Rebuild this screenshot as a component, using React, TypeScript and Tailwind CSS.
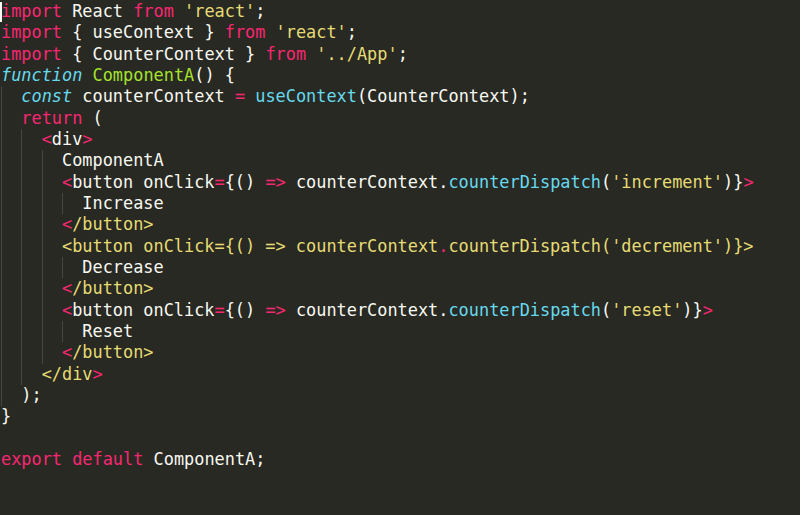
type Tok = [string, string];

const k = "text-[#f92672]";
const s = "text-[#e6db74]";
const f = "text-[#a6e22e]";
const c = "text-[#66d9ef]";
const ci = "text-[#66d9ef] italic";
const w = "text-[#f8f8f2]";

const buttonLine = (arg: string): Tok[] => [
  [k, "<"],
  [w, "button onClick"],
  [k, "="],
  [w, "{() "],
  [k, "=>"],
  [w, " counterContext."],
  [c, "counterDispatch"],
  [w, "("],
  [s, `'${arg}'`],
  [w, ")}"],
  [k, ">"],
];

const lines: [number, Tok[]][] = [
  [0, [[k, "import"], [w, " React "], [k, "from"], [w, " "], [s, "'react'"], [w, ";"]]],
  [0, [[k, "import"], [w, " { useContext } "], [k, "from"], [w, " "], [s, "'react'"], [w, ";"]]],
  [0, [[k, "import"], [w, " { CounterContext } "], [k, "from"], [w, " "], [s, "'../App'"], [w, ";"]]],
  [0, [[ci, "function"], [w, " "], [f, "ComponentA"], [w, "() {"]]],
  [1, [[ci, "const"], [w, " counterContext "], [k, "="], [w, " "], [c, "useContext"], [w, "(CounterContext);"]]],
  [1, [[k, "return"], [w, " ("]]],
  [2, [[k, "<"], [w, "div"], [k, ">"]]],
  [3, [[w, "ComponentA"]]],
  [3, buttonLine("increment")],
  [4, [[w, "Increase"]]],
  [3, [[k, "<"], [s, "/button>"]]],
  [3, [[s, "<button onClick={() => counterContext"], [k, "."], [s, "counterDispatch('decrement')}>"]]],
  [4, [[w, "Decrease"]]],
  [3, [[k, "<"], [s, "/button>"]]],
  [3, buttonLine("reset")],
  [4, [[w, "Reset"]]],
  [3, [[k, "<"], [s, "/button>"]]],
  [2, [[s, "</div"], [k, ">"]]],
  [1, [[w, ");"]]],
  [0, [[w, "}"]]],
  [0, []],
  [0, [[k, "export default"], [w, " ComponentA;"]]],
];

const App = () => {
  return (
    <div
      className="min-h-screen w-full bg-[#282922] pt-[1px] pl-[1px] text-[16.9px] whitespace-pre"
      style={{ fontFamily: '"DejaVu Sans Mono", "Liberation Mono", monospace' }}
    >
      {lines.map(([indent, toks], i) => (
        <div key={i} className="relative flex h-[21.33px] leading-[21.33px]">
          {i === 0 && (
            <span className="absolute left-[-1px] top-[1px] h-[20px] w-[2px] bg-[#f8f8f2]" />
          )}
          {Array.from({ length: indent }).map((_, j) => (
            <span key={j} className="inline-block w-[2ch] shadow-[inset_1px_0_0_#45463f]">
              {"  "}
            </span>
          ))}
          {toks.map(([cls, text], j) => (
            <span key={j} className={cls}>
              {text}
            </span>
          ))}
        </div>
      ))}
    </div>
  );
};

export default App;
